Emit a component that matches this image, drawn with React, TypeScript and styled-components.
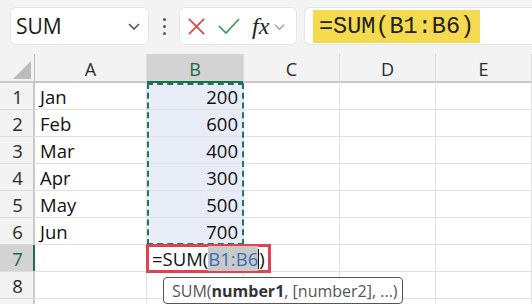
import React from "react";
import styled, { createGlobalStyle } from "styled-components";

const GlobalStyle = createGlobalStyle`
  html, body {
    margin: 0;
    padding: 0;
    background: #ffffff;
  }
  body {
    font-family: "Open Sans", "Noto Sans", sans-serif;
    overflow: hidden;
  }
`;

const Page = styled.div`
  width: 532px;
  height: 304px;
  overflow: hidden;
  background: #ffffff;
`;

const Toolbar = styled.div`
  display: flex;
  align-items: center;
  height: 54px;
  padding: 0 0 2px 10px;
  box-sizing: border-box;
  background: #f3f3f3;
`;

const NameBox = styled.div`
  display: flex;
  align-items: center;
  justify-content: space-between;
  width: 139px;
  height: 38px;
  box-sizing: border-box;
  padding: 0 6px 0 5px;
  background: #ffffff;
  border: 1px solid #e6e6e6;
  border-radius: 6px;
  font-size: 21px;
  color: #1a1a1a;
`;

const Grip = styled.div`
  display: flex;
  flex-direction: column;
  align-items: center;
  gap: 4px;
  width: 30px;
  span {
    width: 3px;
    height: 3px;
    border-radius: 50%;
    background: #555;
  }
`;

const ActionBox = styled.div`
  display: flex;
  align-items: center;
  width: 118px;
  height: 38px;
  box-sizing: border-box;
  padding: 0 0 0 7px;
  gap: 12px;
  background: #ffffff;
  border: 1px solid #e6e6e6;
  border-radius: 6px;
`;

const Fx = styled.span`
  font-family: "Liberation Serif", "DejaVu Serif", serif;
  font-style: italic;
  font-size: 24px;
  color: #222;
  margin-right: -9px;
`;

const FormulaInput = styled.div`
  flex: 1;
  display: flex;
  align-items: center;
  height: 38px;
  margin-left: 7px;
  padding-left: 8px;
  box-sizing: border-box;
  background: #ffffff;
  border: 1px solid #e6e6e6;
  border-right: none;
  border-radius: 6px 0 0 6px;
`;

const FormulaText = styled.span`
  font-family: "Liberation Mono", "DejaVu Sans Mono", monospace;
  font-size: 23.5px;
  color: #222;
  background: #f5d94f;
  padding: 2px 6px;
  line-height: 29px;
`;

const SheetWrap = styled.div`
  position: relative;
`;

const Sheet = styled.div`
  display: grid;
  grid-template-columns: 35px 112px 97px 96px 96px 96px;
  grid-template-rows: 29px repeat(9, 27px);
`;

const ColHead = styled.div<{ $active?: boolean }>`
  display: flex;
  align-items: center;
  justify-content: center;
  font-size: 18px;
  color: ${(p) => (p.$active ? "#1d6b3a" : "#2b2b2b")};
  background: ${(p) => (p.$active ? "#d3d3d3" : "#f3f3f3")};
  border-right: 1px solid #dcdcdc;
  box-sizing: border-box;
  box-shadow: inset 0 -2px 0 ${(p) => (p.$active ? "#1d7044" : "#c8c8c8")};
`;

const Corner = styled.div`
  position: relative;
  background: #f3f3f3;
  border-right: 1px solid #bdbdbd;
  box-shadow: inset 0 -2px 0 #c8c8c8;
  &::after {
    content: "";
    position: absolute;
    right: 3px;
    bottom: 4px;
    width: 18px;
    height: 18px;
    background: #bcbcbc;
    clip-path: polygon(100% 0, 100% 100%, 0 100%);
  }
`;

const RowHead = styled.div<{ $active?: boolean }>`
  display: flex;
  align-items: center;
  justify-content: center;
  font-size: 18.5px;
  color: ${(p) => (p.$active ? "#1d6b3a" : "#2b2b2b")};
  background: ${(p) => (p.$active ? "#d3d3d3" : "#f3f3f3")};
  border-bottom: 1px solid #dcdcdc;
  box-sizing: border-box;
  box-shadow: inset -2px 0 0 ${(p) => (p.$active ? "#1d7044" : "#c8c8c8")};
`;

const Cell = styled.div<{ $num?: boolean; $picked?: boolean }>`
  display: flex;
  align-items: center;
  justify-content: ${(p) => (p.$num ? "flex-end" : "flex-start")};
  padding: 0 5px;
  font-size: 18.5px;
  color: #111;
  background: ${(p) => (p.$picked ? "#e8ecf7" : "#ffffff")};
  border-right: 1px solid #e1e1e1;
  border-bottom: 1px solid #e1e1e1;
  box-sizing: border-box;
`;

const Marquee = styled.div`
  position: absolute;
  left: 147px;
  top: 29px;
  width: 97px;
  height: 162px;
  box-sizing: border-box;
  border: 2px dashed #1f7466;
  pointer-events: none;
`;

const Editor = styled.div`
  position: absolute;
  left: 146px;
  top: 190px;
  width: 125px;
  height: 29px;
  box-sizing: border-box;
  border: 3px solid #e0434b;
  background: #ffffff;
  display: flex;
  align-items: center;
  padding-left: 3px;
  font-size: 18.5px;
  color: #111;
  white-space: nowrap;
`;

const RefText = styled.span`
  color: #3c6fb7;
  background: #c9c9c9;
`;

const Caret = styled.span`
  display: inline-block;
  width: 1px;
  height: 20px;
  background: #111;
`;

const Tip = styled.div`
  position: absolute;
  left: 163px;
  top: 223px;
  width: 240px;
  height: 27px;
  box-sizing: border-box;
  padding: 0 8px;
  display: flex;
  align-items: center;
  background: #ffffff;
  border: 1px solid #555;
  border-radius: 4px;
  font-size: 16px;
  color: #555;
  white-space: nowrap;
  b {
    color: #333;
    font-weight: 700;
  }
`;

const months = [
  ["Jan", 200],
  ["Feb", 600],
  ["Mar", 400],
  ["Apr", 300],
  ["May", 500],
  ["Jun", 700],
];

const cols = ["A", "B", "C", "D", "E"];

const Chevron = ({ color, size }: { color: string; size: number }) => (
  <svg width={size} height={size} viewBox="0 0 16 16">
    <path d="M3 6l5 5 5-5" fill="none" stroke={color} strokeWidth="1.4" />
  </svg>
);

const App = () => {
  const rows: (string | number)[][] = [...months, ["", ""], ["", ""], ["", ""]];
  return (
    <Page>
      <GlobalStyle />
      <Toolbar>
        <NameBox>
          <span>SUM</span>
          <Chevron color="#444" size={16} />
        </NameBox>
        <Grip>
          <span />
          <span />
          <span />
        </Grip>
        <ActionBox>
          <svg width="19" height="19" viewBox="0 0 20 20">
            <path d="M2 2l16 16M18 2L2 18" stroke="#e0463f" strokeWidth="1.8" fill="none" />
          </svg>
          <svg width="22" height="18" viewBox="0 0 22 18">
            <path d="M1 9l7 7L21 2" stroke="#3a9a5b" strokeWidth="1.7" fill="none" />
          </svg>
          <Fx>fx</Fx>
          <Chevron color="#9a9a9a" size={15} />
        </ActionBox>
        <FormulaInput>
          <FormulaText>=SUM(B1:B6)</FormulaText>
        </FormulaInput>
      </Toolbar>
      <SheetWrap>
        <Sheet>
          <Corner />
          {cols.map((c) => (
            <ColHead key={c} $active={c === "B"}>
              {c}
            </ColHead>
          ))}
          {rows.map((r, i) => (
            <React.Fragment key={i}>
              <RowHead $active={i === 6}>{i < 8 ? i + 1 : ""}</RowHead>
              <Cell>{r[0]}</Cell>
              <Cell $num $picked={i < 6}>
                {r[1]}
              </Cell>
              <Cell />
              <Cell />
              <Cell />
            </React.Fragment>
          ))}
        </Sheet>
        <Marquee />
        <Editor>
          =SUM(<RefText>B1:B6</RefText>
          <Caret />)
        </Editor>
        <Tip>
          SUM(<b>number1</b>, [number2], ...)
        </Tip>
      </SheetWrap>
    </Page>
  );
};

export default App;
